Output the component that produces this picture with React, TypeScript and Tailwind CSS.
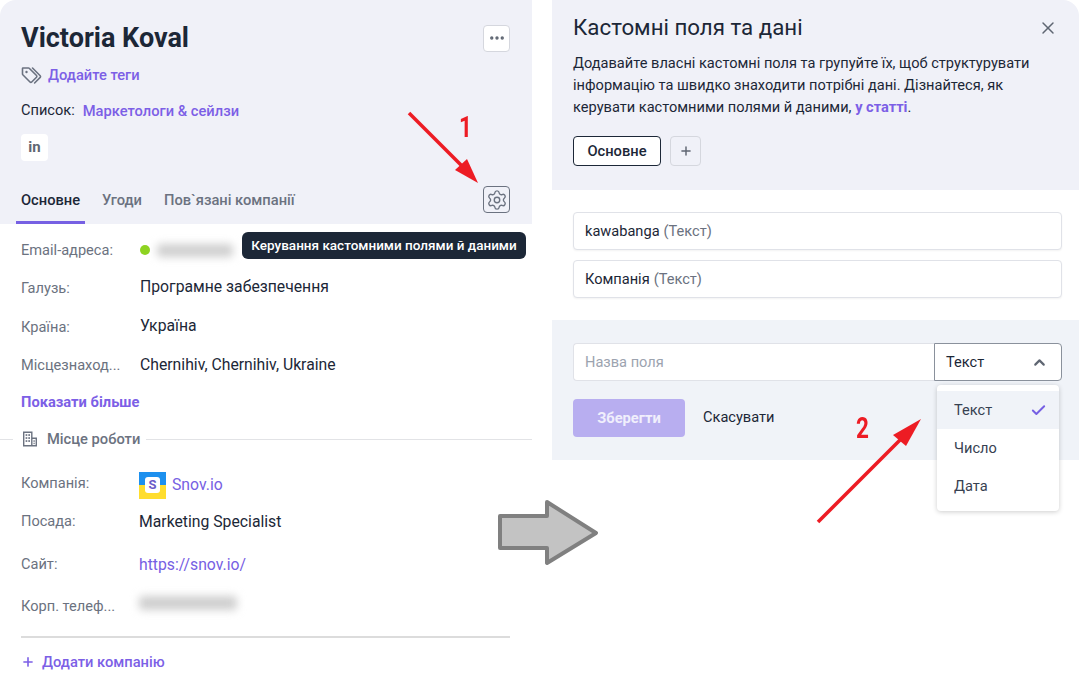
import { Check, ChevronUp, Ellipsis, Plus, Settings, X } from 'lucide-react';

const font = { fontFamily: 'Roboto, "Noto Sans", sans-serif' };

function TagsIcon() {
  return (
    <svg width="22" height="20" viewBox="0 0 22 20" fill="none" stroke="#6b7280" strokeWidth="1.6" strokeLinejoin="round" strokeLinecap="round">
      <path d="M1.5 3.5V9a1 1 0 0 0 .3.7L9 17a1.2 1.2 0 0 0 1.7 0l4.8-4.8a1.2 1.2 0 0 0 0-1.7L8.2 3.3a1 1 0 0 0-.7-.3H2a.5.5 0 0 0-.5.5z" />
      <path d="M11.5 3l7.7 7.7a1.2 1.2 0 0 1 0 1.7L13.6 18" />
      <circle cx="5.5" cy="7" r="1.2" fill="#6b7280" stroke="none" />
    </svg>
  );
}

function BuildingIcon() {
  return (
    <svg width="16" height="16" viewBox="0 0 16 16" fill="#6b7280">
      <path d="M2 0.5h8.5v6H15v9H1v-15h1zM2.4 1.9v12.2h6.7V1.9zM10.5 8v6.1h3.1V8z" fillRule="evenodd" />
      <rect x="3.6" y="3.2" width="1.7" height="1.7" />
      <rect x="6.3" y="3.2" width="1.7" height="1.7" />
      <rect x="3.6" y="6.2" width="1.7" height="1.7" />
      <rect x="6.3" y="6.2" width="1.7" height="1.7" />
      <rect x="3.6" y="9.2" width="1.7" height="1.7" />
      <rect x="6.3" y="9.2" width="1.7" height="1.7" />
      <rect x="11.5" y="9.2" width="1.2" height="1.7" />
      <rect x="11.5" y="11.7" width="1.2" height="1.4" />
    </svg>
  );
}

function Row({ label, h, children }: { label: string; h: string; children: React.ReactNode }) {
  return (
    <div className={`flex items-center ${h}`}>
      <span className="w-[119px] shrink-0 translate-y-px text-[14.6px] text-[#6b7280]">{label}</span>
      {children}
    </div>
  );
}

function ProfilePanel() {
  return (
    <div className="w-[532px] shrink-0">
      {/* Header */}
      <section className="h-[224px] rounded-tl-2xl bg-[#f0f1f8] pl-[21px] pr-[22px] pt-[24px]">
        <div className="flex h-[28px] items-center justify-between">
          <h1 className="text-[27px] font-bold leading-none text-[#1c2737]">Victoria Koval</h1>
          <button className="flex h-[27px] w-[27px] items-center justify-center rounded border border-[#d5d7de] bg-white text-[#5f6672]">
            <Ellipsis size={18} strokeWidth={2.5} />
          </button>
        </div>
        <div className="mt-[13px] flex h-[20px] items-center gap-[5px]">
          <TagsIcon />
          <span className="text-[14.7px] font-medium text-[#7c5fe6]">Додайте теги</span>
        </div>
        <div className="mt-[16px] flex h-[20px] items-center gap-[8px]">
          <span className="text-[14.6px] text-[#1c2737]">Список:</span>
          <span className="text-[14.7px] font-medium text-[#7c5fe6]">Маркетологи &amp; сейлзи</span>
        </div>
        <div className="mt-[13px] flex h-[27px] w-[27px] items-center justify-center rounded bg-white text-[15px] font-bold text-[#5f6672]">
          in
        </div>
        <div className="mt-[25px] flex h-[38px] justify-between">
          <nav className="flex gap-[22px] text-[14.7px] font-medium text-[#6b7280]">
            <span className="-mx-[5px] h-[38px] border-b-[3px] border-[#7660e3] px-[5px] pt-[3px] text-[#1c2737]">Основне</span>
            <span className="pt-[3px]">Угоди</span>
            <span className="pt-[3px]">Пов`язані компанії</span>
          </nav>
          <button className="flex h-[27px] w-[27px] items-center justify-center rounded border border-[#6b7280] text-[#6b7280]">
            <Settings size={22} strokeWidth={1.5} />
          </button>
        </div>
      </section>

      {/* Contact info */}
      <section className="pl-[21px] pt-[7px]">
        <Row label="Email-адреса:" h="h-[38px]">
          <span className="h-[10px] w-[10px] rounded-full bg-[#8ed321]" />
          <span className="ml-[7px] h-[13px] w-[76px] rounded bg-[#cfcfcf] blur-[4px]" />
        </Row>
        <Row label="Галузь:" h="h-[38px]">
          <span className="-mt-[3px] text-[15.75px] text-[#1c2737]">Програмне забезпечення</span>
        </Row>
        <Row label="Країна:" h="h-[39px]">
          <span className="-mt-[1px] text-[15.75px] text-[#1c2737]">Україна</span>
        </Row>
        <Row label="Місцезнаход..." h="h-[38px]">
          <span className="text-[15.75px] text-[#1c2737]">Chernihiv, Chernihiv, Ukraine</span>
        </Row>
        <div className="mt-[8px] text-[14.7px] font-bold leading-[20px] text-[#7c5fe6]">Показати більше</div>
      </section>

      {/* Workplace */}
      <div className="mt-[17px] flex h-[20px] items-center">
        <span className="h-px w-[13px] bg-[#e2e3e6]" />
        <span className="ml-[9px] flex"><BuildingIcon /></span>
        <span className="ml-[9px] text-[14.7px] font-medium text-[#6b7280]">Місце роботи</span>
        <span className="ml-[6px] h-px flex-1 bg-[#e2e3e6]" />
      </div>
      <section className="pl-[21px] pr-[22px] pt-[13px]">
        <div className="flex h-[46px] items-center">
          <span className="-mt-[3px] w-[118px] shrink-0 text-[14.6px] text-[#6b7280]">Компанія:</span>
          <span className="relative flex h-[27px] w-[27px] items-center justify-center bg-gradient-to-b from-[#1d90ee] from-50% to-[#ffdd2e] to-50%">
            <span className="flex h-[16px] w-[15px] items-center justify-center rounded-[3px] bg-white text-[13px] font-bold text-[#6a5ac8]">S</span>
          </span>
          <span className="ml-[6px] text-[15.75px] text-[#7660e3]">Snov.io</span>
        </div>
        <div className="flex h-[27px] items-center">
          <span className="w-[118px] shrink-0 text-[14.6px] text-[#6b7280]">Посада:</span>
          <span className="text-[15.75px] text-[#1c2737]">Marketing Specialist</span>
        </div>
        <div className="mt-[14px] flex h-[32px] items-center">
          <span className="w-[118px] shrink-0 text-[14.6px] text-[#6b7280]">Сайт:</span>
          <span className="text-[15.75px] text-[#7660e3]">https://snov.io/</span>
        </div>
        <div className="mt-[10px] flex h-[32px] items-center">
          <span className="w-[118px] shrink-0 text-[14.6px] text-[#6b7280]">Корп. телеф...</span>
          <span className="-mt-[8px] h-[14px] w-[98px] rounded bg-[#cfcfcf] blur-[4px]" />
        </div>
        <div className="mt-[13px] h-[2px] bg-[#dcdcdc]" />
        <div className="mt-[14px] flex h-[20px] items-center gap-[7px] text-[14.7px] font-medium text-[#7c5fe6]">
          <Plus size={14} strokeWidth={2.75} />
          <span>Додати компанію</span>
        </div>
      </section>
    </div>
  );
}

function FieldRow({ name }: { name: string }) {
  return (
    <div className="flex h-[38px] items-center rounded border border-[#e0e2e8] bg-white px-[11px] pt-[2px] text-[14.6px] shadow-[0_1px_2px_rgba(0,0,0,0.05)]">
      <span className="text-[#1c2737]">{name}</span>
      <span className="ml-[4px] text-[#6b7280]">(Текст)</span>
    </div>
  );
}

function CustomFieldsPanel() {
  return (
    <div className="ml-[20px] min-w-0 flex-1">
      <section className="relative h-[190px] rounded-tr-2xl bg-[#f0f1f8] pl-[21px] pr-[17px] pt-[13px]">
        <div className="flex items-start justify-between">
          <h2 className="text-[22.3px] leading-[28px] text-[#1c2737]">Кастомні поля та дані</h2>
          <button className="mr-[4px] mt-[5px] text-[#5f6672]">
            <X size={20} strokeWidth={1.75} />
          </button>
        </div>
        <p className="mt-[11px] w-[470px] text-[14.6px] leading-[22px] text-[#1c2737]">
          Додавайте власні кастомні поля та групуйте їх, щоб структурувати інформацію та швидко знаходити потрібні дані. Дізнайтеся, як керувати кастомними полями й даними, <span className="font-bold text-[#7c5fe6]">у статті</span>.
        </p>
        <div className="mt-[18px] flex gap-[9px]">
          <button className="flex h-[30px] w-[88px] items-center justify-center rounded border border-[#1c2737] bg-white text-[14.7px] font-medium text-[#1c2737]">
            Основне
          </button>
          <button className="flex h-[30px] w-[31px] items-center justify-center rounded border border-[#d5d7de] text-[#5f6672]">
            <Plus size={14} strokeWidth={2.5} />
          </button>
        </div>
      </section>

      <section className="flex flex-col gap-[10px] pl-[21px] pr-[17px] pt-[22px]">
        <FieldRow name="kawabanga" />
        <FieldRow name="Компанія" />
      </section>

      <section className="mt-[22px] h-[140px] bg-[#f0f3f8] pl-[21px] pr-[17px] pt-[23px]">
        <div className="relative flex h-[38px]">
          <div className="flex flex-1 items-center rounded-l border border-r-0 border-[#e0e2e8] bg-white px-[11px] pt-[2px] text-[14.6px] text-[#9ca3af]">
            Назва поля
          </div>
          <div className="flex w-[128px] items-center justify-between rounded-r border border-[#8a919c] bg-white pl-[11px] pr-[13px] text-[14.6px] text-[#1c2737]">
            <span className="pt-[2px]">Текст</span>
            <ChevronUp size={17} strokeWidth={3} className="text-[#5f6672]" />
          </div>
          {/* Opened select */}
          <div className="absolute right-[3px] top-[42px] z-10 w-[122px] rounded bg-white py-[6px] text-[14.6px] text-[#374151] shadow-[0_1px_5px_rgba(0,0,0,0.2)]">
            <div className="flex h-[38px] items-center justify-between bg-[#f0f3f8] pl-[17px] pr-[12px]">
              <span className="pt-[2px]">Текст</span>
              <Check size={17} strokeWidth={2.75} className="text-[#7660e3]" />
            </div>
            <div className="flex h-[38px] items-center pl-[17px] pt-[2px]">Число</div>
            <div className="flex h-[38px] items-center pl-[17px] pt-[2px]">Дата</div>
          </div>
        </div>
        <div className="mt-[18px] flex items-center gap-[18px]">
          <button className="h-[38px] w-[112px] rounded bg-[#b8aef0] text-[14.7px] font-bold text-[#f0effc]">Зберегти</button>
          <span className="text-[14.6px] text-[#1c2737]">Скасувати</span>
        </div>
      </section>
    </div>
  );
}

export default function App() {
  return (
    <div className="relative flex h-[680px] w-[1079px] overflow-hidden bg-white" style={font}>
      <ProfilePanel />
      <CustomFieldsPanel />

      {/* Tooltip */}
      <div className="absolute left-[242px] top-[232px] flex h-[27px] w-[284px] items-center justify-center rounded-md bg-[#1c2737] text-[13.5px] font-medium text-white">
        Керування кастомними полями й даними
      </div>

      {/* Annotations drawn over the screenshot */}
      <svg className="pointer-events-none absolute left-0 top-0" width="1079" height="680" viewBox="0 0 1079 680">
        <line x1="409" y1="113" x2="464" y2="168" stroke="#ed1c24" strokeWidth="3.5" />
        <polygon points="478,183 455,170 467,159" fill="#ed1c24" />
        <line x1="818" y1="522" x2="902" y2="438" stroke="#ed1c24" strokeWidth="3.5" />
        <polygon points="921,419 893,435 906,446" fill="#ed1c24" />
        <polygon
          points="500,516 547,516 547,502 596,533 547,563 547,548 500,548"
          fill="#c3c3c3"
          stroke="#808080"
          strokeWidth="4"
          strokeLinejoin="round"
        />
      </svg>
      <span className="absolute left-[459px] top-[110px] origin-left scale-x-75 text-[30px] font-bold leading-[34px] text-[#ed1c24]">1</span>
      <span className="absolute left-[856px] top-[411px] origin-left scale-x-75 text-[30px] font-bold leading-[34px] text-[#ed1c24]">2</span>
    </div>
  );
}
